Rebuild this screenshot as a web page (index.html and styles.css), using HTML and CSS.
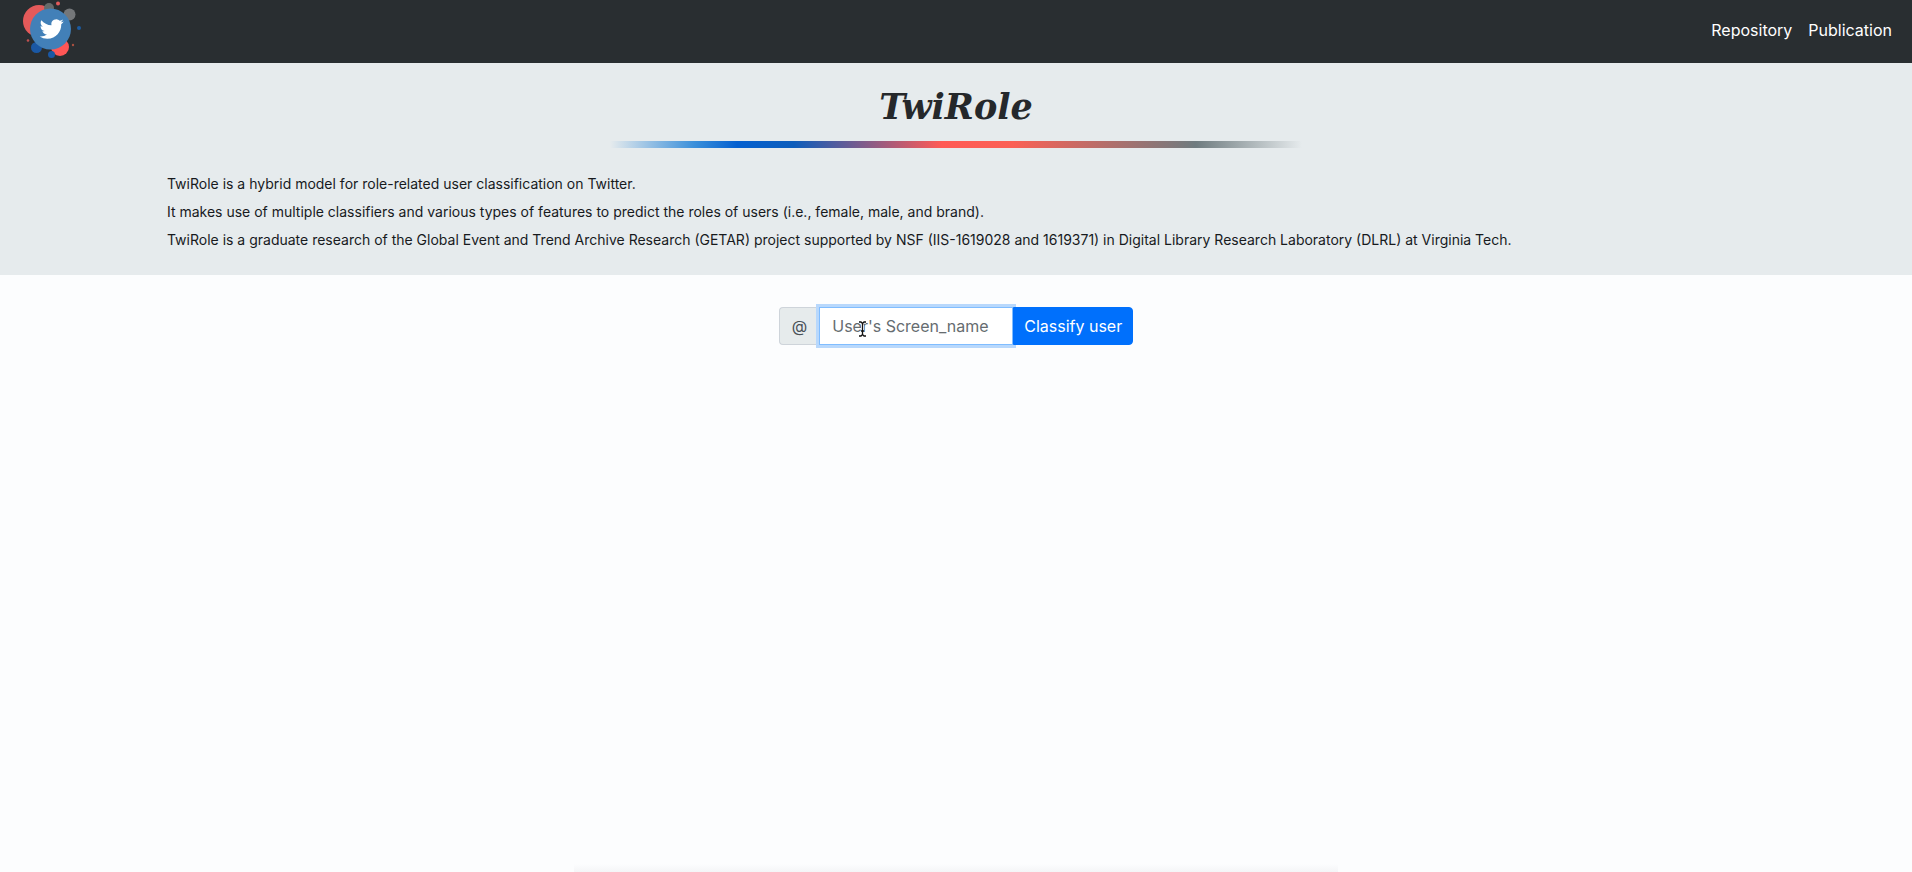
FILE: index.html
```html
<!DOCTYPE html>
<html lang="en">
<head>
<meta charset="utf-8">
<meta name="viewport" content="width=device-width, initial-scale=1">
<title>TwiRole</title>
<link rel="stylesheet" href="styles.css">
</head>
<body>
<nav class="navbar">
  <a class="brand" href="#" aria-label="TwiRole home">
    <svg width="64" height="63" viewBox="20 0 64 63" aria-hidden="true">
      <circle cx="39" cy="21" r="16" fill="#e45a5a"/>
      <circle cx="49" cy="8" r="5" fill="#666b6b"/>
      <circle cx="58" cy="3.500" r="2" fill="#e45a5a"/>
      <circle cx="69.500" cy="14.500" r="6" fill="#74777a"/>
      <circle cx="79" cy="28" r="2" fill="#1a5aa0"/>
      <circle cx="60" cy="47" r="9" fill="#ff5656"/>
      <circle cx="36.500" cy="47.500" r="5.500" fill="#1a58a4"/>
      <circle cx="51.500" cy="54.500" r="3.500" fill="#1a58a4"/>
      <circle cx="28" cy="40.500" r="1.300" fill="#c05050"/>
      <circle cx="73" cy="45" r="1.200" fill="#a85040"/>
      <circle cx="50.500" cy="29" r="20.500" fill="#4280b8"/>
      <path transform="translate(39.700 17)" fill="#fff" d="M23.953 4.570a10 10 0 0 1-2.825.775 4.958 4.958 0 0 0 2.163-2.723c-.951.555-2.005.959-3.127 1.184a4.920 4.920 0 0 0-8.384 4.482C7.690 8.095 4.067 6.130 1.640 3.162a4.822 4.822 0 0 0-.666 2.475c0 1.710.870 3.213 2.188 4.096a4.904 4.904 0 0 1-2.228-.616v.060a4.923 4.923 0 0 0 3.946 4.827 4.996 4.996 0 0 1-2.212.085 4.936 4.936 0 0 0 4.604 3.417 9.867 9.867 0 0 1-6.102 2.105c-.390 0-.779-.023-1.170-.067a13.995 13.995 0 0 0 7.557 2.209c9.053 0 13.998-7.496 13.998-13.985 0-.210 0-.420-.015-.630a9.935 9.935 0 0 0 2.460-2.548z"/>
    </svg>
  </a>
  <div class="nav-links">
    <a href="#">Repository</a>
    <a href="#">Publication</a>
  </div>
</nav>
<header class="intro">
  <h1 class="title">TwiRole</h1>
  <hr class="rainbow">
  <div class="about">
    <p>TwiRole is a hybrid model for role-related user classification on Twitter.</p>
    <p>It makes use of multiple classifiers and various types of features to predict the roles of users (i.e., female, male, and brand).</p>
    <p>TwiRole is a graduate research of the Global Event and Trend Archive Research (GETAR) project supported by NSF (IIS-1619028 and 1619371) in Digital Library Research Laboratory (DLRL) at Virginia Tech.</p>
  </div>
</header>
<main class="content">
  <form class="search">
    <label class="at" for="screen-name">@</label>
    <div class="field">
      <input id="screen-name" class="name" type="text" placeholder="User's Screen_name">
      <svg class="pointer" width="9" height="16" viewBox="0 0 9 16" aria-hidden="true">
        <path d="M1 1h2l1.500 1.500L6 1h2M4.500 2v12M1 15h2l1.500-1.500L6 15h2M3 10h3" fill="none" stroke="#fff" stroke-width="3"/>
        <path d="M1 1h2l1.500 1.500L6 1h2M4.500 2v12M1 15h2l1.500-1.500L6 15h2M3 10h3" fill="none" stroke="#111" stroke-width="1.300"/>
      </svg>
    </div>
    <button class="classify" type="button">Classify user</button>
  </form>
</main>
<div class="page-end"></div>
</body>
</html>
```
FILE: styles.css
```css
* {
  box-sizing: border-box;
}

body {
  display: flex;
  flex-direction: column;
  min-height: 100vh;
  margin: 0;
  background: #fcfdfe;
  color: #171a1d;
  font-family: Inter, "Liberation Sans", sans-serif;
  font-size: 16px;
  line-height: 24px;
}

.navbar {
  display: flex;
  align-items: center;
  justify-content: space-between;
  padding: 0 20px;
  background: #292e31;
}

.brand svg {
  display: block;
}

.nav-links {
  display: flex;
  gap: 16px;
  padding-bottom: 4px;
}

.nav-links a {
  color: #fff;
  text-decoration: none;
}

.intro {
  padding: 24px 8% 19px;
  background: #e6ebed;
}

.title {
  margin: 0;
  color: #25282b;
  font-family: "DejaVu Serif", serif;
  font-size: 35px;
  font-style: italic;
  font-weight: 700;
  line-height: 40px;
  text-align: center;
}

.rainbow {
  width: 44%;
  height: 7px;
  margin: 14px auto 24px;
  border: 0;
  background: linear-gradient(to right, transparent 1%, #3a8fda 13%, #0560d0 19%, #0d5dbb 27%, #ff5a55 48%, #fb6055 58%, #6f7c80 84%, transparent 99%);
}

.about {
  padding: 0 14px;
  font-size: 14px;
}

.about p {
  margin: 0 0 5px;
  line-height: 23px;
}

.content {
  flex: 1;
  padding-top: 32px;
}

.search {
  display: flex;
  justify-content: center;
}

.at {
  padding: 6px 12px;
  border: 1px solid #ced4da;
  border-right: 0;
  border-radius: 4px 0 0 4px;
  background: #e6ebec;
  color: #495057;
}

.field {
  position: relative;
}

.name {
  display: block;
  width: 194px;
  height: 38px;
  padding: 6px 12px;
  border: 1px solid #80bdff;
  border-radius: 0;
  outline: 0;
  background: #fff;
  box-shadow: 0 0 0 3px #b8d8fc;
  color: #495057;
  font: inherit;
}

.name::placeholder {
  color: #666c70;
  opacity: 1;
}

.pointer {
  position: absolute;
  top: 14px;
  left: 39px;
}

.classify {
  position: relative;
  padding: 6px 10px;
  border: 1px solid #0070fc;
  border-radius: 0 4px 4px 0;
  background: #0070fc;
  color: #fff;
  font: inherit;
}

.page-end {
  width: 40%;
  height: 8px;
  margin: 0 auto;
  background: linear-gradient(to bottom, #fcfdfe, #f4f5f7);
}
```
